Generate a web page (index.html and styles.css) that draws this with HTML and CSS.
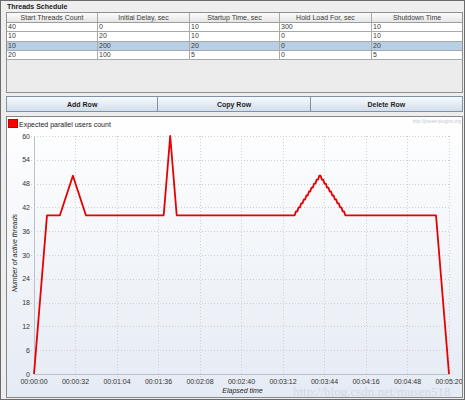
FILE: index.html
```html
<!DOCTYPE html>
<html lang="en">

<head>
  <meta charset="UTF-8" />
  <title>Ultimate Thread Group</title>
  <link rel="stylesheet" href="styles.css">
</head>

<body>
  <div class="frame">
    <div class="title">Threads Schedule</div>

    <!-- Schedule table -->
    <div class="table-wrap">
      <div class="row head">
        <div class="cell">Start Threads Count</div>
        <div class="cell">Initial Delay, sec</div>
        <div class="cell">Startup Time, sec</div>
        <div class="cell">Hold Load For, sec</div>
        <div class="cell">Shutdown Time</div>
      </div>
      <div class="row">
        <div class="cell">40</div>
        <div class="cell">0</div>
        <div class="cell">10</div>
        <div class="cell">300</div>
        <div class="cell">10</div>
      </div>
      <div class="row">
        <div class="cell">10</div>
        <div class="cell">20</div>
        <div class="cell">10</div>
        <div class="cell">0</div>
        <div class="cell">10</div>
      </div>
      <div class="row selected">
        <div class="cell">10</div>
        <div class="cell">200</div>
        <div class="cell">20</div>
        <div class="cell">0</div>
        <div class="cell">20</div>
      </div>
      <div class="row">
        <div class="cell">20</div>
        <div class="cell">100</div>
        <div class="cell">5</div>
        <div class="cell">0</div>
        <div class="cell">5</div>
      </div>
    </div>

    <div class="buttons">
      <button>Add Row</button>
      <button>Copy Row</button>
      <button>Delete Row</button>
    </div>

    <!-- Expected users chart -->
    <div class="chart">
      <svg class="plot" width="455" height="280" viewBox="7 117 455 280">
        <rect class="legend-box" x="8.5" y="119.5" width="9" height="8" />
        <text class="legend" x="19" y="127">Expected parallel users count</text>
        <text class="credit" x="461" y="123" text-anchor="end">http://jmeter-plugins.org</text>

        <path class="grid"
          d="M31 136.5H449M31 160.5H449M31 184.5H449M31 207.5H449M31 231.5H449M31 255.5H449M31 279.5H449M31 303.5H449M31 326.5H449M31 350.5H449
             M75.5 136V377M117.5 136V377M158.5 136V377M200.5 136V377M241.5 136V377M283.5 136V377M324.5 136V377M366.5 136V377M407.5 136V377M449.5 136V377" />
        <path class="axis" d="M34.5 136V375M34 374.5H450" />

        <g class="tick" text-anchor="end">
          <text x="30" y="138.5">60</text>
          <text x="30" y="162.3">54</text>
          <text x="30" y="186.1">48</text>
          <text x="30" y="209.9">42</text>
          <text x="30" y="233.7">36</text>
          <text x="30" y="257.5">30</text>
          <text x="30" y="281.3">24</text>
          <text x="30" y="305.1">18</text>
          <text x="30" y="328.9">12</text>
          <text x="30" y="352.7">6</text>
          <text x="30" y="376.5">0</text>
        </g>
        <g class="tick" text-anchor="middle">
          <text x="34" y="384">00:00:00</text>
          <text x="75.5" y="384">00:00:32</text>
          <text x="117" y="384">00:01:04</text>
          <text x="158.5" y="384">00:01:36</text>
          <text x="200" y="384">00:02:08</text>
          <text x="241.5" y="384">00:02:40</text>
          <text x="283" y="384">00:03:12</text>
          <text x="324.5" y="384">00:03:44</text>
          <text x="366" y="384">00:04:16</text>
          <text x="407.5" y="384">00:04:48</text>
          <text x="449" y="384">00:05:20</text>
        </g>

        <text class="axis-title" transform="translate(17 253) rotate(-90)" text-anchor="middle">Number of active threads</text>
        <text class="axis-title" x="242.5" y="393" text-anchor="middle">Elapsed time</text>

        <polyline class="series" points="34,374 47,215.3 59.9,215.3 72.9,175.7 85.9,215.3 163.7,215.3 170.2,136 176.7,215.3
          293.4,215.3 294.7,215.3 296,211.4 297.3,211.4 298.6,207.4 299.9,207.4 301.2,203.4 302.5,203.4 303.8,199.5 305.1,199.5
          306.4,195.5 307.7,195.5 309,191.5 310.2,191.5 311.5,187.6 312.8,187.6 314.1,183.6 315.4,183.6 316.7,179.6 318,179.6
          319.3,175.7 320.6,175.7 321.9,179.6 323.2,179.6 324.5,183.6 325.8,183.6 327.1,187.6 328.4,187.6 329.7,191.5 331,191.5
          332.3,195.5 333.6,195.5 334.9,199.5 336.2,199.5 337.5,203.4 338.8,203.4 340.1,207.4 341.4,207.4 342.7,211.4 344,211.4
          345.3,215.3 436,215.3 449,374" />

        <text class="watermark" x="293" y="395.5">http://blog.csdn.net/musen518</text>
      </svg>
    </div>
  </div>
</body>

</html>
```

FILE: styles.css
```css
/* Page */
body {
  margin: 0;
  font-family: "Liberation Sans", Arial, sans-serif;
}

.frame {
  width: 465px;
  height: 400px;
  box-sizing: border-box;
  border: 1px solid #6b6b6b;
  background: #eeeeee;
  padding: 0 1px 0 5px;
  display: flex;
  flex-direction: column;
}

.title {
  height: 11px;
  line-height: 11px;
  padding-left: 1px;
  font-size: 7px;
  font-weight: bold;
  color: #222;
}

/* Schedule table */
.table-wrap {
  height: 81px;
  box-sizing: border-box;
  border: 1px solid #909090;
  background: #ececec;
}

.row {
  display: grid;
  grid-template-columns: 91px 92px 90px 92px 90px;
}

.cell {
  box-sizing: border-box;
  height: 9.33px;
  line-height: 8.33px;
  padding-left: 1px;
  font-size: 7px;
  color: #3a3a3a;
  background: #fff;
  border-right: 1px solid #a9a9a9;
  border-bottom: 1px solid #a9a9a9;
  white-space: nowrap;
  overflow: hidden;
}

.cell:last-child {
  border-right: none;
}

.row.selected .cell {
  background: #b8cfe5;
}

.row.head .cell {
  height: 10px;
  line-height: 9px;
  padding-left: 0;
  text-align: center;
  background: linear-gradient(#fbfbfb, #e6e6e6);
  border-bottom-color: #9c9c9c;
}

/* Buttons */
.buttons {
  display: grid;
  grid-template-columns: repeat(3, 1fr);
  height: 16px;
  margin-top: 3px;
}

.buttons button {
  margin: 0;
  padding: 0;
  font-family: "Liberation Sans", Arial, sans-serif;
  font-size: 7px;
  font-weight: bold;
  color: #1e1e1e;
  border: 1px solid #7f91a5;
  background: linear-gradient(#f7fafd, #d2deea);
}

.buttons button + button {
  border-left: none;
}

/* Chart */
.chart {
  height: 282px;
  margin-top: 4px;
  box-sizing: border-box;
  border: 1px solid #878787;
  background: linear-gradient(#ffffff, #e5ebf4);
}

.plot {
  display: block;
  font-family: "Liberation Sans", Arial, sans-serif;
}

.legend-box {
  fill: #ff0000;
  stroke: #c40000;
}

.legend {
  font-size: 7px;
  fill: #222;
}

.credit {
  font-size: 4.6px;
  fill: #c3c8d0;
}

.grid {
  fill: none;
  stroke: #cfcfcf;
  stroke-width: 1;
  stroke-dasharray: 1 2;
}

.axis {
  fill: none;
  stroke: #b9c1cc;
  stroke-width: 1;
}

.tick {
  font-size: 7px;
  fill: #333;
}

.axis-title {
  font-size: 7px;
  font-style: italic;
  fill: #222;
}

.series {
  fill: none;
  stroke: #e60000;
  stroke-width: 1.8;
  stroke-linejoin: round;
}

.watermark {
  font-family: "Liberation Serif", serif;
  font-size: 13px;
  fill: #d3d8e0;
}
```
